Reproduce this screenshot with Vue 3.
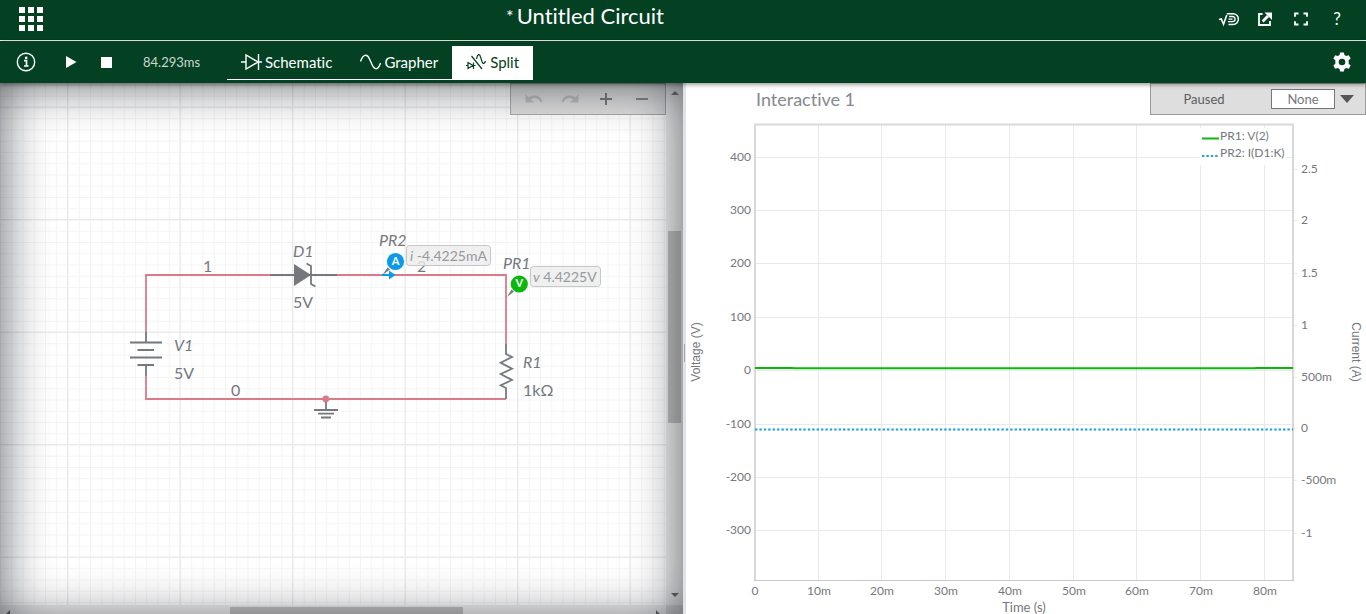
<script setup>
import { ref } from 'vue'

const activeTab = ref('split')
const probeMode = ref('None')

const plot = { left: 69, right: 607, top: 42, bottom: 497 }
const voltageTicks = [
  { label: '400', y: 74 }, { label: '300', y: 127 }, { label: '200', y: 180 },
  { label: '100', y: 234 }, { label: '0', y: 287 }, { label: '-100', y: 341 },
  { label: '-200', y: 394 }, { label: '-300', y: 447 }
]
const currentTicks = [
  { label: '2.5', y: 86 }, { label: '2', y: 137 }, { label: '1.5', y: 190 },
  { label: '1', y: 242 }, { label: '500m', y: 294 }, { label: '0', y: 345 },
  { label: '-500m', y: 397 }, { label: '-1', y: 450 }
]
const timeTicks = [
  { label: '0', x: 69 }, { label: '10m', x: 133 }, { label: '20m', x: 196 },
  { label: '30m', x: 260 }, { label: '40m', x: 324 }, { label: '50m', x: 388 },
  { label: '60m', x: 451 }, { label: '70m', x: 515 }, { label: '80m', x: 579 }
]
</script>

<template>
  <div class="app">
    <header class="titlebar">
      <button class="icon-btn apps" aria-label="Menu">
        <svg width="24" height="24" viewBox="0 0 24 24" fill="#fff">
          <path d="M0 0h6v6H0zM9 0h6v6H9zM18 0h6v6h-6zM0 9h6v6H0zM9 9h6v6H9zM18 9h6v6h-6zM0 18h6v6H0zM9 18h6v6H9zM18 18h6v6h-6z" />
        </svg>
      </button>
      <h1 class="title"><span class="dirty">*</span>Untitled Circuit</h1>
      <nav class="actions">
        <button class="icon-btn" aria-label="Multisim">
          <svg width="22" height="16" viewBox="0 0 22 16" fill="none" stroke="#fff">
            <path d="M1 8.500l2.300-.5 2.200 5.200L8.800 4" stroke-width="1.600" />
            <path d="M8.800 2.700H15a5.400 5.400 0 0 1 0 10.800h-4.500" stroke-width="1.500" />
            <path d="M11 5.500h3.500a2.600 2.600 0 0 1 0 5.200H10M10.500 8.100h4" stroke-width="1.300" />
          </svg>
        </button>
        <button class="icon-btn" aria-label="Share">
          <svg width="16" height="16" viewBox="0 0 16 16" fill="none" stroke="#fff">
            <path d="M5.500 3H2v11h11v-4" stroke-width="1.800" />
            <path d="M5.600 10.400L11 5" stroke-width="2.800" />
            <path d="M7.500 1.500H15v7.500z" fill="#fff" stroke="none" />
          </svg>
        </button>
        <button class="icon-btn" aria-label="Full screen">
          <svg width="14" height="14" viewBox="0 0 14 14" fill="none" stroke="#fff" stroke-width="1.800">
            <path d="M1 4.800V1.500h3.500M9.500 1.500H13v3.300M13 9.200v3.300H9.500M4.500 12.500H1V9.200" />
          </svg>
        </button>
        <button class="icon-btn help" aria-label="Help">?</button>
      </nav>
    </header>

    <div class="toolbar">
      <button class="icon-btn info" aria-label="Document info">
        <svg width="20" height="20" viewBox="0 0 20 20" fill="none" stroke="#fff">
          <circle cx="10" cy="10" r="8.700" stroke-width="1.400" />
          <path d="M8 8.700h2.500v5.500M8 14h4.500" stroke-width="1.700" />
          <circle cx="10.200" cy="5.900" r="1.300" fill="#fff" stroke="none" />
        </svg>
      </button>
      <button class="icon-btn" aria-label="Run">
        <svg width="12" height="12" viewBox="0 0 12 12" fill="#fff"><path d="M1 0l10.500 6L1 12z" /></svg>
      </button>
      <button class="icon-btn" aria-label="Stop">
        <svg width="12" height="12" viewBox="0 0 12 12" fill="#fff"><path d="M0 1h11v11H0z" /></svg>
      </button>
      <span class="time">84.293ms</span>
      <div class="tabs" role="tablist">
        <button class="tab" role="tab" :class="{ active: activeTab === 'schematic' }" @click="activeTab = 'schematic'">
          <svg width="21" height="18" viewBox="0 0 21 18" fill="none" stroke="currentColor" stroke-width="1.400">
            <path d="M0 9h5M5 2v14l12-7zM17.500 1v16M17.500 9H21" />
          </svg>
          <span>Schematic</span>
        </button>
        <button class="tab" role="tab" :class="{ active: activeTab === 'grapher' }" @click="activeTab = 'grapher'">
          <svg width="21" height="18" viewBox="0 0 21 18" fill="none" stroke="currentColor" stroke-width="1.400">
            <path d="M.5 8.500C3 1 7 .5 9.500 6l2.500 5.500c3 6.500 6.500 5 8.500-1.500" />
          </svg>
          <span>Grapher</span>
        </button>
        <button class="tab" role="tab" :class="{ active: activeTab === 'split' }" @click="activeTab = 'split'">
          <svg width="21" height="18" viewBox="0 0 21 18" fill="none" stroke="currentColor" stroke-width="1.200">
            <path d="M0 12.500h2M2 9.500v6l5-3zM7.500 9.500v6.500M7.500 12.500H9.500M5.500 3l10.500 13M10.500 6c1-5 3-6 4-2l1.700 5c1 2.500 2.500 1.500 3.300-1" />
          </svg>
          <span>Split</span>
        </button>
      </div>
      <button class="icon-btn gear" aria-label="Settings">
        <svg width="20" height="20" viewBox="0 0 18 18">
          <path fill="#fff" fill-rule="evenodd" d="M7.300 .5h3.400l.5 2.300 1.600.9 2.300-.8 1.700 2.900L15 7.400v3.200l1.800 1.600-1.700 2.900-2.300-.8-1.600.9-.5 2.300H7.300l-.5-2.300-1.600-.9-2.300.8-1.700-2.900L3 10.600V7.400L1.200 5.800l1.700-2.900 2.300.8 1.600-.9zM9 6a3 3 0 1 0 0 6 3 3 0 0 0 0-6z" />
        </svg>
      </button>
    </div>

    <main class="workspace">
      <section class="schematic">
        <div class="canvas">
          <svg class="fill" aria-label="Schematic">
            <defs>
              <pattern id="minor" width="11.250" height="11.250" x="67.500" y="24" patternUnits="userSpaceOnUse">
                <path d="M0 .5h11.250M.5 0v11.250" stroke="#f4f4f5" fill="none" />
              </pattern>
              <pattern id="major" width="112.500" height="112.500" x="67" y="23.500" patternUnits="userSpaceOnUse">
                <path d="M0 .6h112.500M.6 0v112.500" stroke="#e8e9ea" stroke-width="1.200" fill="none" />
              </pattern>
            </defs>
            <rect width="100%" height="100%" fill="url(#minor)" />
            <rect width="100%" height="100%" fill="url(#major)" />
            <g transform="translate(0 -83)">
              <g class="wire">
                <path d="M146 332V275H270M337 275H506V344M506 399H146V376" />
                <circle cx="325.800" cy="399" r="3.400" />
              </g>
              <g class="part">
                <path d="M270 275h67M306.500 263.500l4.500 2.500v18l4.500 2.500" />
                <path d="M294 264v22l17-11z" class="solid" />
                <path d="M146 332v10.500M130 342.500h32M137.500 350h16.500M130 357.500h32M137.500 365h16.500M146 365v11" />
                <path d="M326 402v8M314 410h24M318 413.700h16M321 417.500h10" />
                <path d="M506 344v10l6 3-11.300 5.700 11.300 6-11.300 5.300 11.300 6-11.300 5.300 5.300 2.700v11" />
              </g>
              <g class="label">
                <text x="203" y="272">1</text>
                <text x="231" y="396">0</text>
                <text x="417" y="272">2</text>
                <text x="293" y="257" class="it">D1</text>
                <text x="293" y="308">5V</text>
                <text x="174" y="351" class="it">V1</text>
                <text x="174" y="379">5V</text>
                <text x="379" y="246" class="it">PR2</text>
                <text x="503" y="269" class="it">PR1</text>
                <text x="523" y="368" class="it">R1</text>
                <text x="523" y="396">1kΩ</text>
              </g>
              <g class="reading">
                <rect x="406.500" y="245.500" width="84" height="20" rx="3" />
                <text x="410" y="261"><tspan class="it">i</tspan> -4.4225mA</text>
                <rect x="530.500" y="266.500" width="70" height="20" rx="3" />
                <text x="533" y="282"><tspan class="it">v</tspan> 4.4225V</text>
              </g>
              <path d="M382.500 275l5-7.500 2.500 2z" fill="#75787d" />
              <path d="M382 274h7v-3.500l6.500 4.500-6.500 4.500V276h-7z" fill="#0c9ae8" />
              <circle cx="395.500" cy="261.500" r="8.600" fill="#0c9ae8" />
              <path d="M507 297l4.500-7.500 2.500 2z" fill="#75787d" />
              <circle cx="519.300" cy="284" r="8.600" fill="#09b80c" />
              <g class="probe">
                <text x="395.500" y="265">A</text>
                <text x="519.300" y="287">V</text>
              </g>
            </g>
          </svg>
          <div class="zoombar">
            <button class="icon-btn" aria-label="Undo">
              <svg width="18" height="12" viewBox="0 0 18 12">
                <path d="M.5 1v8.500H9L5.800 6.500C10 3.800 13.500 5 15.500 9.500l2-.8C15 2 8.500 1 3.800 4.400z" fill="#bdbdbf" />
              </svg>
            </button>
            <button class="icon-btn" aria-label="Redo">
              <svg width="18" height="12" viewBox="0 0 18 12">
                <path d="M17.500 1v8.500H9l3.200-3C8 3.800 4.500 5 2.500 9.500l-2-.8C3 2 9.500 1 14.200 4.400z" fill="#bdbdbf" />
              </svg>
            </button>
            <button class="icon-btn" aria-label="Zoom in">
              <svg width="12" height="12" viewBox="0 0 12 12"><path d="M5 0h2v5h5v2H7v5H5V7H0V5h5z" fill="#7c7c7e" /></svg>
            </button>
            <button class="icon-btn" aria-label="Zoom out">
              <svg width="12" height="12" viewBox="0 0 12 12"><path d="M0 5h12v2H0z" fill="#8a8a8c" /></svg>
            </button>
          </div>
        </div>
        <div class="vscroll">
          <i class="arrow up"></i>
          <div class="vtrack"><i class="thumb"></i></div>
          <i class="arrow down"></i>
        </div>
        <div class="hscroll">
          <i class="arrow left"></i>
          <div class="htrack"><i class="thumb"></i></div>
          <i class="arrow right"></i>
        </div>
        <div class="corner"></div>
      </section>

      <div class="divider"><i></i></div>

      <section class="grapher">
        <svg class="fill" aria-label="Interactive 1">
          <text x="70" y="23" class="chart-title">Interactive 1</text>
          <g stroke="#e9e9ea" transform="translate(0 .5)">
            <line v-for="t in voltageTicks" :key="'h' + t.label" :x1="plot.left" :x2="plot.right" :y1="t.y" :y2="t.y" />
            <line v-for="t in currentTicks" :key="'r' + t.label" :x1="plot.right" :x2="plot.right + 4" :y1="t.y" :y2="t.y" />
          </g>
          <g stroke="#e9e9ea" transform="translate(-.5 0)">
            <line v-for="t in timeTicks.slice(1)" :key="'v' + t.label" :x1="t.x" :x2="t.x" :y1="plot.top" :y2="plot.bottom" />
          </g>
          <path d="M69 497V41.500H607V497" stroke="#d8d9da" stroke-width="2" fill="none" />
          <path d="M68 497.500H608" stroke="#c6c7c9" fill="none" />
          <rect x="514" y="45" width="87" height="37" fill="#fff" />
          <path d="M69 285H107L108 285.300H569L570 285H607" stroke="#09b80c" stroke-width="2" fill="none" />
          <path d="M69 346.500H607" class="dots" />
          <path d="M516 55.500h17" stroke="#09b80c" stroke-width="2" />
          <path d="M516 73h17" class="dots" />
          <g class="tick">
            <text x="534" y="57">PR1: V(2)</text>
            <text x="534" y="74">PR2: I(D1:K)</text>
            <text v-for="t in voltageTicks" :key="'vl' + t.label" x="65" :y="t.y + 4" text-anchor="end">{{ t.label }}</text>
            <text v-for="t in currentTicks" :key="'cl' + t.label" x="615" :y="t.y + 4">{{ t.label }}</text>
            <text v-for="t in timeTicks" :key="'tl' + t.label" :x="t.x" y="512" text-anchor="middle">{{ t.label }}</text>
          </g>
          <text x="338" y="529" text-anchor="middle" class="axis-x">Time (s)</text>
          <text transform="translate(14 269) rotate(-90)" text-anchor="middle" class="axis-y">Voltage (V)</text>
          <text transform="translate(666 269) rotate(90)" text-anchor="middle" class="axis-y">Current (A)</text>
        </svg>
        <div class="statusbar">
          <span class="state">Paused</span>
          <select v-model="probeMode" aria-label="Cursors">
            <option>None</option>
            <option>Vertical</option>
            <option>Horizontal</option>
          </select>
          <button class="icon-btn" aria-label="More">
            <svg width="14" height="8" viewBox="0 0 14 8"><path d="M0 0h14L7 8z" fill="#555" /></svg>
          </button>
        </div>
      </section>
    </main>
  </div>
</template>

<style>
body {
  margin: 0;
  background: #fff;
}
</style>

<style scoped>
.app {
  display: flex;
  flex-direction: column;
  height: 100vh;
  overflow: hidden;
  font-family: Lato, "Noto Sans", sans-serif;
  font-variant-ligatures: none;
  color: #75787d;
}
.icon-btn {
  display: flex;
  align-items: center;
  justify-content: center;
  width: 36px;
  height: 30px;
  padding: 0;
  border: 0;
  background: none;
  font-family: inherit;
}
.titlebar {
  flex: none;
  display: flex;
  height: 40px;
  padding: 0 11px 0 19px;
  background: #044123;
  border-bottom: 1px solid #fff;
}
.apps {
  width: 24px;
  height: 38px;
}
.title {
  flex: 1;
  display: flex;
  align-items: center;
  justify-content: center;
  gap: 3px;
  height: 31px;
  margin: 0;
  color: #fff;
  font-size: 22px;
  font-weight: 400;
}
.dirty {
  font-size: 18px;
}
.actions {
  display: flex;
  align-items: center;
  height: 37px;
  margin-left: 84px;
}
.help {
  color: #fff;
  font-size: 17px;
}
.toolbar {
  position: relative;
  z-index: 2;
  flex: none;
  display: flex;
  align-items: center;
  height: 42px;
  padding: 0 6px 0 8px;
  background: #044123;
  box-shadow: 0 1px 5px rgba(0, 0, 0, 0.5);
}
.info {
  margin-right: 9px;
}
.time {
  width: 84px;
  margin-left: 18px;
  color: #cbd8d0;
  font-size: 13px;
}
.tabs {
  display: flex;
  height: 33px;
  margin-top: 2px;
  margin-right: auto;
  border-bottom: 1px solid #fff;
}
.tab {
  display: flex;
  align-items: center;
  gap: 3px;
  padding: 0 14px 2px;
  border: 0;
  background: none;
  color: #fff;
  font-family: inherit;
  font-variant-ligatures: none;
  font-size: 15px;
}
.tab.active {
  background: #fff;
  color: #044123;
}
.workspace {
  flex: none;
  display: flex;
  height: calc(100vh - 75px);
}
.schematic {
  position: relative;
  display: grid;
  grid-template: minmax(0, 1fr) 17px / minmax(0, 1fr) 17px;
  width: 50%;
}
.schematic::after {
  content: "";
  position: absolute;
  inset: 0;
  box-shadow: inset 0 0 50px rgba(4, 8, 18, 0.65);
  pointer-events: none;
}
.canvas {
  position: relative;
  overflow: hidden;
}
.fill {
  display: block;
  width: 100%;
  height: 100%;
}
.wire path {
  fill: none;
  stroke: #d97b88;
  stroke-width: 1.8;
}
.wire circle {
  fill: #d97b88;
}
.part path {
  fill: none;
  stroke: #75787d;
  stroke-width: 1.8;
}
.part .solid {
  fill: #75787d;
  stroke: none;
}
.label text {
  fill: #75787d;
  font-size: 16px;
}
.it {
  font-style: italic;
}
.reading rect {
  fill: rgba(236, 236, 237, 0.8);
  stroke: #c6c7c8;
}
.reading text {
  fill: #97999c;
  font-size: 14px;
}
.probe text {
  fill: #fff;
  font-size: 11px;
  font-weight: 700;
  text-anchor: middle;
}
.zoombar {
  position: absolute;
  top: 0;
  right: 0;
  display: flex;
  padding: 0 5px;
  background: #dedede;
  border: 1px solid #aaa;
}
.vscroll {
  display: flex;
  flex-direction: column;
  align-items: center;
  padding: 8px 0;
  background: #f1f1f1;
}
.hscroll {
  display: flex;
  align-items: center;
  padding: 0 6px;
  background: #f1f1f1;
}
.corner {
  background: #dcdcdc;
}
.arrow {
  border: 4px solid transparent;
}
.up {
  border-top: 0;
  border-bottom-color: #808080;
}
.down {
  border-bottom: 0;
  border-top-color: #707070;
}
.left {
  border-left: 0;
  border-right-color: #707070;
}
.right {
  border-right: 0;
  border-left-color: #707070;
}
.vtrack {
  flex: 1;
  width: 13px;
}
.htrack {
  flex: 1;
  height: 13px;
}
.thumb {
  display: block;
  background: #c1c1c1;
}
.vtrack .thumb {
  height: 192px;
  margin-top: 136px;
}
.htrack .thumb {
  width: 233px;
  height: 13px;
  margin-left: 220px;
}
.divider {
  display: flex;
  align-items: center;
  justify-content: center;
  width: 3px;
  background: #dde3e8;
}
.divider i {
  width: 1px;
  height: 18px;
  background: #a5a8ab;
}
.grapher {
  position: relative;
  flex: 1;
  background: #fff;
}
.chart-title {
  fill: #85888c;
  font-size: 18px;
}
.dots {
  fill: none;
  stroke: #1c9fe0;
  stroke-width: 2;
  stroke-dasharray: 2.4 2;
}
.tick text {
  fill: #75787d;
  font-size: 12px;
}
.axis-x {
  fill: #75787d;
  font-size: 13px;
}
.axis-y {
  fill: #75787d;
  font-family: "Liberation Sans", sans-serif;
  font-size: 12px;
}
.statusbar {
  position: absolute;
  top: 0;
  right: 0;
  display: flex;
  align-items: center;
  height: 30px;
  background: #dedede;
  border: 1px solid #999;
}
.state {
  width: 106px;
  color: #5b5d60;
  font-size: 13px;
  text-align: center;
}
.statusbar select {
  appearance: none;
  width: 64px;
  height: 20px;
  margin-left: 14px;
  padding: 0;
  border: 1px solid #777;
  border-radius: 0;
  background: #fff;
  color: #75787d;
  font-family: inherit;
  font-size: 13px;
  text-align: center;
  text-align-last: center;
}
.statusbar .icon-btn {
  width: 30px;
  padding-right: 6px;
}
</style>
